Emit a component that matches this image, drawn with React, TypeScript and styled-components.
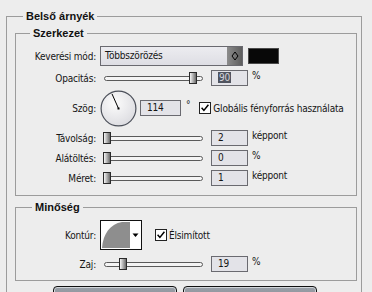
import React from "react";
import styled, { createGlobalStyle } from "styled-components";

const GlobalStyle = createGlobalStyle`
  html, body {
    margin: 0;
    background: #ededed;
  }
  body {
    width: 372px;
    height: 292px;
    overflow: hidden;
    font-family: "DejaVu Sans Condensed", "Liberation Sans", sans-serif;
    font-size: 10px;
    letter-spacing: -0.2px;
    color: #151515;
  }
`;

const sliders = [
  { label: "Távolság:", value: "2", unit: "képpont", thumb: 3 },
  { label: "Alátöltés:", value: "0", unit: "%", thumb: 3 },
  { label: "Méret:", value: "1", unit: "képpont", thumb: 3 },
];

const angle = 114;
const rad = (angle * Math.PI) / 180;

const Dial = () => (
  <svg width="37" height="37" viewBox="0 0 37 37">
    <defs>
      <radialGradient id="dialFill" cx="40%" cy="35%" r="75%">
        <stop offset="0" stopColor="#fcfcfc" />
        <stop offset="1" stopColor="#d9d9de" />
      </radialGradient>
    </defs>
    <circle cx="18.5" cy="18.5" r="17.4" fill="url(#dialFill)" stroke="#4c505a" strokeWidth="1.2" />
    <line
      x1="18.5"
      y1="18.5"
      x2={18.5 + 16 * Math.cos(rad)}
      y2={18.5 - 16 * Math.sin(rad)}
      stroke="#000"
      strokeWidth="1"
    />
    <rect x="17.5" y="17.5" width="2" height="2" fill="#000" />
  </svg>
);

const Check = () => (
  <CheckBox width="12" height="12" viewBox="0 0 12 12">
    <rect x="0.5" y="0.5" width="11" height="11" fill="#fff" stroke="#222" />
    <path d="M2.6 5.8 L4.9 8.4 L9.4 2.8" fill="none" stroke="#000" strokeWidth="1.5" />
  </CheckBox>
);

const Contour = () => (
  <ContourPicker width="42" height="30" viewBox="0 0 42 30">
    <rect x="0.5" y="0.5" width="41" height="29" fill="#fff" stroke="#111" />
    <path d="M2 28 C3 14 10 4 22 2 L30 2 L30 28 Z" fill="#8e8e8e" />
    <polygon points="32.5,13.5 38.5,13.5 35.5,17" fill="#000" />
  </ContourPicker>
);

const Slider = ({ thumb }: { thumb: number }) => (
  <SliderBox>
    <Track />
    <Thumb style={{ left: thumb }} />
  </SliderBox>
);

export default function App() {
  return (
    <>
      <GlobalStyle />
      <Page>
        <Group $outer>
          <Legend $indent={16}>Belső árnyék</Legend>
          <Group>
            <Legend $indent={14}>Szerkezet</Legend>
            <Rows $bottom={9}>
              <Row $height={20}>
                <Label>Keverési mód:</Label>
                <Select>
                  <SelectText>Többszörözés</SelectText>
                  <SelectArrow>
                    <svg width="8" height="10" viewBox="0 0 8 10">
                      <polygon points="4,1 7,5 4,9 1,5" fill="none" stroke="#000" />
                    </svg>
                  </SelectArrow>
                </Select>
                <Swatch />
              </Row>
              <Row $height={16}>
                <Label>Opacitás:</Label>
                <Slider thumb={89} />
                <NumberBox>
                  <Selected>90</Selected>
                </NumberBox>
                <Unit>%</Unit>
              </Row>
              <Row $height={36}>
                <Label>Szög:</Label>
                <DialWrap>
                  <Dial />
                </DialWrap>
                <NumberBox $width={41}>{angle}</NumberBox>
                <Degree>°</Degree>
                <Check />
                <span>Globális fényforrás használata</span>
              </Row>
              {sliders.map((s) => (
                <Row $height={16} key={s.label}>
                  <Label>{s.label}</Label>
                  <Slider thumb={s.thumb} />
                  <NumberBox>{s.value}</NumberBox>
                  <Unit>{s.unit}</Unit>
                </Row>
              ))}
            </Rows>
          </Group>
          <Group $top={4}>
            <Legend $indent={16}>Minőség</Legend>
            <Rows $bottom={8} $gap={6}>
              <Row $height={30}>
                <Label>Kontúr:</Label>
                <Contour />
                <Check />
                <span>Élsimított</span>
              </Row>
              <Row $height={16}>
                <Label>Zaj:</Label>
                <Slider thumb={19} />
                <NumberBox>19</NumberBox>
                <Unit>%</Unit>
              </Row>
            </Rows>
          </Group>
          <Buttons>
            <Button $width={124} />
            <Button $width={134} />
          </Buttons>
        </Group>
      </Page>
    </>
  );
}

const Page = styled.div`
  padding: 9px 0 0 6px;
  width: 356px;
`;

const Group = styled.fieldset<{ $outer?: boolean; $top?: number }>`
  margin: ${({ $outer, $top }) => ($outer ? "0" : `${$top ?? 2}px 4px 0 8px`)};
  padding: 0;
  min-width: 0;
  border: 1px solid #9c9c9c;
  border-bottom: ${({ $outer }) => ($outer ? "none" : "1px solid #9c9c9c")};
  height: ${({ $outer }) => ($outer ? "320px" : "auto")};
`;

const Legend = styled.legend<{ $indent: number }>`
  margin-left: ${({ $indent }) => $indent}px;
  padding: 0 3px;
  font-family: "Liberation Sans", sans-serif;
  font-weight: bold;
  font-size: 11px;
  letter-spacing: 0;
  line-height: 15px;
  color: #111;
`;

const Rows = styled.div<{ $bottom: number; $gap?: number }>`
  display: flex;
  flex-direction: column;
  gap: ${({ $gap }) => $gap ?? 4}px;
  padding: 5px 0 ${({ $bottom }) => $bottom}px;
`;

const Row = styled.div<{ $height: number }>`
  display: flex;
  align-items: center;
  height: ${({ $height }) => $height}px;
  white-space: nowrap;
`;

const Label = styled.span`
  flex: 0 0 80px;
  margin-right: 4px;
  text-align: right;
`;

const Select = styled.div`
  display: flex;
  width: 143px;
  height: 20px;
  box-sizing: border-box;
  border: 1px solid #6a6a70;
  background: linear-gradient(#ececf0, #dedee4);
`;

const SelectText = styled.span`
  flex: 1;
  padding-left: 4px;
  line-height: 18px;
`;

const SelectArrow = styled.span`
  display: flex;
  align-items: center;
  justify-content: center;
  width: 15px;
  background: linear-gradient(90deg, #8c8c8c, #5e5e5e);
`;

const Swatch = styled.div`
  width: 31px;
  height: 16px;
  margin-left: 5px;
  box-sizing: border-box;
  border: 1px solid #4a4a4a;
  background: #080808;
`;

const SliderBox = styled.div`
  position: relative;
  width: 104px;
  height: 16px;
  margin-right: 7px;
  flex-shrink: 0;
`;

const Track = styled.div`
  height: 5px;
  margin: 6px 1px 0 4px;
  box-sizing: border-box;
  border: 1px solid #5a5a5a;
  border-radius: 3px;
  background: #f4f4f4;
`;

const Thumb = styled.div`
  position: absolute;
  top: 2px;
  width: 8px;
  height: 12px;
  box-sizing: border-box;
  border: 1px solid #2a2a2a;
  background: linear-gradient(90deg, #f6f6f6, #6a6a6a);
`;

const NumberBox = styled.div<{ $width?: number }>`
  width: ${({ $width }) => $width ?? 37}px;
  height: 16px;
  box-sizing: border-box;
  flex-shrink: 0;
  border: 1px solid #6a6a70;
  background: #e3e3e8;
  padding-left: 6px;
  line-height: 14px;
`;

const Selected = styled.span`
  background: #50545f;
  color: #d4d4dc;
  padding: 0 1px;
`;

const Unit = styled.span`
  align-self: flex-start;
  margin-left: 4px;
  line-height: 12px;
`;

const DialWrap = styled.div`
  display: flex;
  margin-right: 3px;
`;

const Degree = styled.span`
  align-self: flex-start;
  margin: 11px 9px 0 5px;
  line-height: 8px;
`;

const CheckBox = styled.svg`
  flex-shrink: 0;
  margin-right: 2px;
`;

const ContourPicker = styled.svg`
  flex-shrink: 0;
  margin-right: 13px;
`;

const Buttons = styled.div`
  display: flex;
  gap: 6px;
  margin: 5px 0 0 46px;
`;

const Button = styled.div<{ $width: number }>`
  width: ${({ $width }) => $width}px;
  height: 24px;
  box-sizing: border-box;
  border: 1px solid #111;
  border-radius: 4px;
  background: linear-gradient(#9aa0a8, #7e848c);
  box-shadow: inset 0 0 0 1px #d2d6da;
`;
